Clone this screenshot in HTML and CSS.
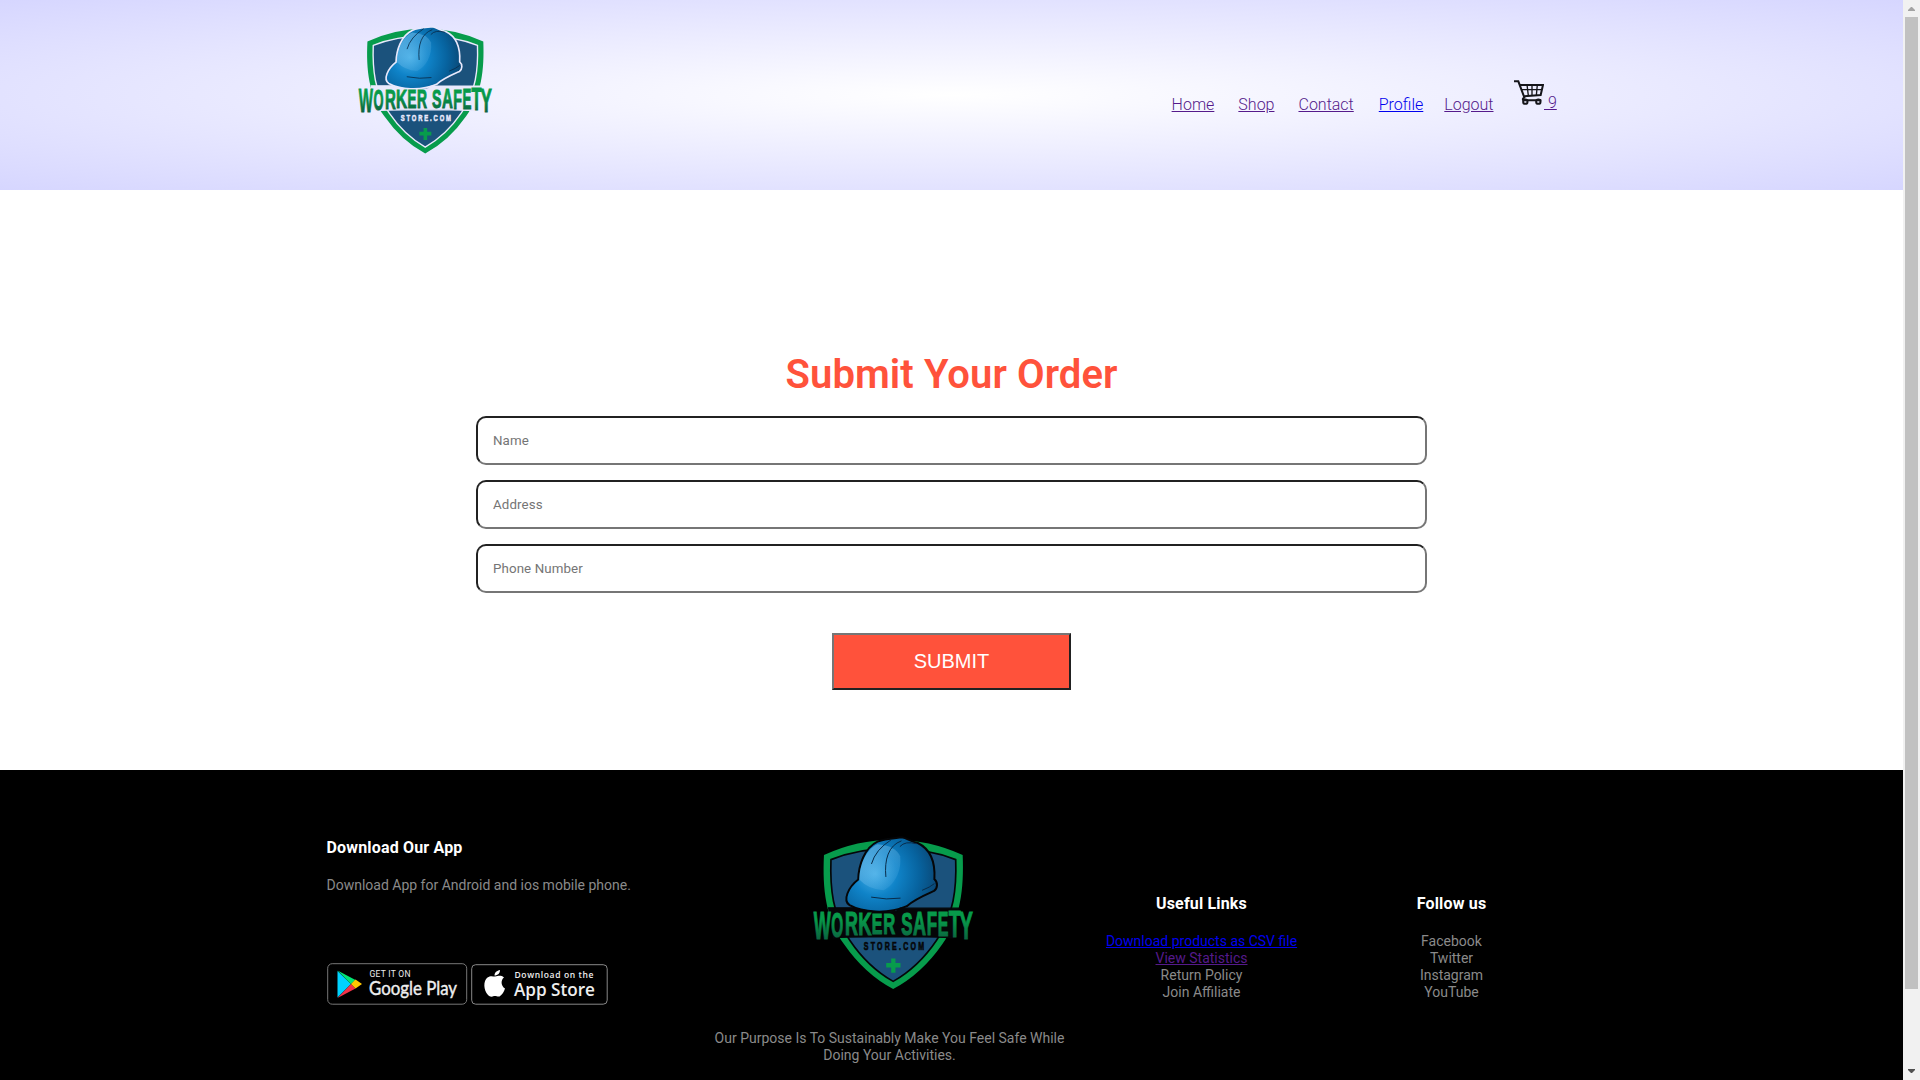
FILE: index.html
```html
<!DOCTYPE html>
<html lang="en">
<head>
<meta charset="utf-8">
<title>Worker Safety Store</title>
<link rel="stylesheet" href="styles.css">
</head>
<body>
<svg class="defs" width="0" height="0" aria-hidden="true">
  <defs>
    <radialGradient id="dome" gradientUnits="userSpaceOnUse" cx="255" cy="165" r="190">
      <stop offset="0" stop-color="#45b0e8"/>
      <stop offset=".35" stop-color="#0f83c8"/>
      <stop offset=".7" stop-color="#07639f"/>
      <stop offset="1" stop-color="#0a4673"/>
    </radialGradient>
    <linearGradient id="shine" x1="0" y1="0" x2="1" y2="1">
      <stop offset="0" stop-color="#9ed4f5" stop-opacity=".55"/>
      <stop offset="1" stop-color="#4aa9e4" stop-opacity=".15"/>
    </linearGradient>
    <linearGradient id="letters" gradientUnits="userSpaceOnUse" x1="0" y1="270" x2="0" y2="362">
      <stop offset=".35" stop-color="#079a4a"/>
      <stop offset="1" stop-color="#0b6340"/>
    </linearGradient>
    <symbol id="logo" viewBox="60 45 500 475">
      <path fill="#079c4c" d="M101 108Q200 62 309 62T518 108C522 210 512 300 456 377Q395 465 309 511Q223 465 162 377C106 300 96 210 101 108Z"/>
      <path class="edge" fill="#1b527c" stroke-width="5" d="M122 122Q205 88 309 88T497 122C500 205 492 290 439 365Q385 445 309 488Q233 445 179 365C126 290 119 205 122 122Z"/>
      <path class="edge" fill="url(#dome)" stroke-width="6" d="M204 182C205 140 222 87 262 68C286 58 310 58 335 55C352 58 362 68 383 72C420 90 436 130 433 181C444 190 443 208 432 216C405 228 372 242 350 262C290 288 215 280 178 259C156 245 174 205 204 182Z"/>
      <path fill="url(#shine)" d="M207 182C208 140 226 92 262 76Q315 80 330 112C335 160 310 200 280 214Q235 212 207 182Z"/>
      <path fill="none" stroke="#082b49" stroke-width="3" stroke-linecap="round" d="M244 134Q256 92 302 63M287 173C282 122 295 79 333 66M330 82Q345 65 378 74M244 235Q290 244 330 238M397 214Q420 205 432 195"/>
      <path class="band" d="M115 267H190Q240 284 318 278L330 268H507L490 357Q430 354 400 354H235Q170 354 130 357Z"/>
      <g class="wordmark" fill="url(#letters)" stroke="url(#letters)">
        <text y="360" font-size="117"><tspan x="70" textLength="51" lengthAdjust="spacingAndGlyphs">W</tspan></text>
        <text y="354" font-size="108"><tspan x="123" textLength="36" lengthAdjust="spacingAndGlyphs">O</tspan></text>
        <text y="350" font-size="102"><tspan x="164" textLength="39" lengthAdjust="spacingAndGlyphs">R</tspan></text>
        <text y="348" font-size="96"><tspan x="204" textLength="40" lengthAdjust="spacingAndGlyphs">K</tspan></text>
        <text y="346" font-size="90"><tspan x="245" textLength="32" lengthAdjust="spacingAndGlyphs">E</tspan></text>
        <text y="347" font-size="90"><tspan x="279" textLength="36" lengthAdjust="spacingAndGlyphs">R</tspan></text>
        <text y="349" font-size="95"><tspan x="333" textLength="34" lengthAdjust="spacingAndGlyphs">S</tspan></text>
        <text y="349" font-size="98"><tspan x="369" textLength="39" lengthAdjust="spacingAndGlyphs">A</tspan></text>
        <text y="350" font-size="102"><tspan x="410" textLength="31" lengthAdjust="spacingAndGlyphs">F</tspan></text>
        <text y="351" font-size="105"><tspan x="443" textLength="32" lengthAdjust="spacingAndGlyphs">E</tspan></text>
        <text y="355" font-size="110"><tspan x="476" textLength="36" lengthAdjust="spacingAndGlyphs">T</tspan></text>
        <text y="360" font-size="117"><tspan x="508" textLength="41" lengthAdjust="spacingAndGlyphs">Y</tspan></text>
      </g>
      <text class="store" transform="scale(.62 1)" x="356" y="395" font-size="34" textLength="292" lengthAdjust="spacing">STORE.COM</text>
      <path fill="#079c4c" d="M303 419h13v14h15v13h-15v16h-13v-16h-15v-13h15z"/>
    </symbol>
  </defs>
</svg>

<div class="window">
  <div class="page">
    <header class="header">
      <div class="navbar">
        <svg class="logo"><use href="#logo"/></svg>
        <nav class="nav">
          <a class="home" href="#h">Home</a>
          <a class="shop" href="#s">Shop</a>
          <a class="contact" href="#c">Contact</a>
          <a class="profile" href="#p">Profile</a>
          <a class="logout" href="#l">Logout</a>
        </nav>
        <a class="cart" href="#cart"><svg class="cart-icon" viewBox="0 0 90 75" fill="none" stroke="#15151a">
          <path stroke-width="6" d="M0 4H13L31 52Q23 58 29 61H82M17 15H87L80 45L30 49"/>
          <path stroke-width="4" d="M22 29H84M39 14L43 47M54 14V47M70 14L67 46"/>
          <circle cx="34" cy="65" r="6.500" stroke-width="6"/><circle cx="73" cy="65" r="6.500" stroke-width="6"/>
        </svg><span class="count">&nbsp;9</span></a>
      </div>
    </header>

    <main class="order">
      <h1>Submit Your Order</h1>
      <form class="form">
        <input type="text" placeholder="Name">
        <input type="text" placeholder="Address">
        <input type="text" placeholder="Phone Number">
        <button type="button">SUBMIT</button>
      </form>
    </main>

    <footer class="footer">
      <section class="app">
        <h3>Download Our App</h3>
        <p>Download App for Android and ios mobile phone.</p>
        <div class="badges">
          <svg width="141" height="42" viewBox="0 0 141 42">
            <rect x=".7" y=".7" width="139" height="40.500" rx="4.500" fill="#000" stroke="#777"/>
            <path fill="#00d2ff" d="M10.500 8L24 21L10.500 34.500Z"/>
            <path fill="#00e676" d="M10.500 7.500L28.500 17L24 21Z"/>
            <path fill="#f43249" d="M10.500 35L28.500 25.500L24 21Z"/>
            <path fill="#ffc800" d="M28.500 16.500L35 21L28.500 25.500L24 21Z"/>
            <text x="42.500" y="14" class="get" textLength="41">GET IT ON</text>
            <text x="42" y="32" class="google" textLength="88" lengthAdjust="spacingAndGlyphs">Google Play</text>
          </svg>
          <svg width="137" height="41" viewBox="0 0 137 41">
            <rect x=".7" y=".7" width="135.500" height="39.500" rx="4" fill="#000" stroke="#888"/>
            <path fill="#fff" d="M24 12.500C27 12.500 29 10.500 33 13.500C29.500 16 29.800 22 34 24.500C33 28 31 31 28.500 32.500C26 33 25.500 31.500 23 32C20.500 33 19 33 17 31C12.500 26 12 17 16.500 13.500C19.500 11.500 21.500 12.500 24 12.500ZM23.500 11.500C23.500 8.500 26 6.500 29 6C29 9 27 11.500 23.500 11.500Z"/>
            <text x="43.500" y="14" class="dl" textLength="79">Download on the</text>
            <text x="43" y="32" class="store-name" textLength="81" lengthAdjust="spacingAndGlyphs">App Store</text>
          </svg>
        </div>
      </section>
      <section class="purpose">
        <svg class="logo"><use href="#logo"/></svg>
        <p>Our Purpose Is To Sustainably Make You Feel Safe While<br>Doing Your Activities.</p>
      </section>
      <section class="links">
        <h3>Useful Links</h3>
        <ul>
          <li><a class="fresh" href="#csv">Download products as CSV file</a></li>
          <li><a href="#stats">View Statistics</a></li>
          <li>Return Policy</li>
          <li>Join Affiliate</li>
        </ul>
      </section>
      <section class="links">
        <h3>Follow us</h3>
        <ul>
          <li>Facebook</li>
          <li>Twitter</li>
          <li>Instagram</li>
          <li>YouTube</li>
        </ul>
      </section>
    </footer>
  </div>
  <div class="scrollbar">
    <svg width="17" height="17" viewBox="0 0 17 17"><path fill="#a3a3a3" d="M5 11V10L8 7H9L12 10V11Z"/></svg>
    <div class="thumb"></div>
    <svg width="17" height="17" viewBox="0 0 17 17"><path fill="#505050" d="M5 6V7L8 10H9L12 7V6Z"/></svg>
  </div>
</div>
</body>
</html>
```
FILE: styles.css
```css
* { box-sizing: border-box; margin: 0; padding: 0; }
html, body { height: 1080px; overflow: hidden; background: #fff; }
body { font-family: Roboto, sans-serif; }
a { color: #551a8b; }
.defs { display: block; }

.window { display: grid; grid-template-columns: 1903px 17px; height: 1080px; }
.page { height: 1080px; overflow: hidden; }

.header { height: 190px; background: radial-gradient(#fff, #d6d6ff); }
.navbar { display: flex; align-items: flex-start; width: 1250px; height: 190px; margin: 0 auto; font-size: 16px; font-weight: 300; }
.logo { display: block; --outline: #e9e9fc; }
.navbar .logo { width: 139px; height: 132px; margin: 24px 0 0 29px; }
.nav { display: flex; margin-left: auto; padding-top: 95px; line-height: 19px; }
.shop, .contact { margin-left: 24px; }
.profile { margin-left: 25px; }
.logout { margin-left: 21px; }
.cart { display: flex; margin: 80px 19.500px 0 20.500px; width: 43px; text-decoration: none; }
.cart-icon { width: 30px; height: 25px; }
.count { padding-top: 13px; line-height: 19px; text-decoration: underline; white-space: pre; }

.edge { stroke: var(--outline); }
.band { fill: var(--outline); stroke: var(--outline); stroke-width: 4px; }
.wordmark { font-family: "Liberation Sans", sans-serif; font-weight: 700; stroke-width: 3.500px; }
.store { font-family: "Liberation Sans", sans-serif; font-weight: 700; fill: var(--outline); stroke: var(--outline); stroke-width: 2px; }

.order { display: flex; flex-direction: column; align-items: center; height: 580px; padding-top: 161px; }
h1 { color: #ff523b; font-size: 40px; line-height: 47px; font-weight: 600; letter-spacing: .1px; }
.form { display: flex; flex-direction: column; align-items: center; width: 951px; padding-top: 18px; gap: 15px; }
input { width: 951px; height: 49px; padding: 0 15px; border: 2px inset #767676; border-radius: 10px; font: 400 13.333px Roboto, sans-serif; letter-spacing: .1px; background: #fff; }
input::placeholder { color: #757575; }
button { width: 239px; height: 57px; margin-top: 25px; border: 2px outset #767676; background: #ff523b; color: #fff; font: 20px "Liberation Sans", Arial, sans-serif; }

.footer { display: grid; grid-template-columns: 363px 400px 224px 276px; height: 310px; padding-left: 326.500px; background: #000; color: #8a8a8a; font-size: 14px; line-height: 17px; }
h3 { color: #fff; font-size: 16px; line-height: 19px; font-weight: 700; letter-spacing: .17px; }
.app { padding-top: 68px; }
.app p { margin-top: 20px; }
.badges { display: flex; align-items: center; gap: 3px; margin-top: 69px; padding-left: .500px; }
.purpose { display: flex; flex-direction: column; align-items: center; padding-top: 64px; text-align: center; }
.purpose .logo { --outline: #050608; width: 167px; height: 158px; margin-left: 8px; }
.purpose p { margin-top: 38px; }
.links { padding-top: 124px; text-align: center; }
.links ul { margin-top: 20px; list-style: none; }
.fresh, .profile { color: #0000ee; }
.badges text { fill: #eee; }
.get { font: 400 8.500px Roboto, sans-serif; }
.badges .google { font: 400 18.500px Lato, sans-serif; stroke: #eee; stroke-width: .400px; }
.dl { font: 600 8.500px "Open Sans", sans-serif; }
.store-name { font: 600 18px "Open Sans", sans-serif; }

.scrollbar { display: flex; flex-direction: column; height: 1080px; background: #f1f1f1; }
.thumb { width: 13px; height: 972px; margin: 0 2px 74px; background: #c1c1c1; }
```
